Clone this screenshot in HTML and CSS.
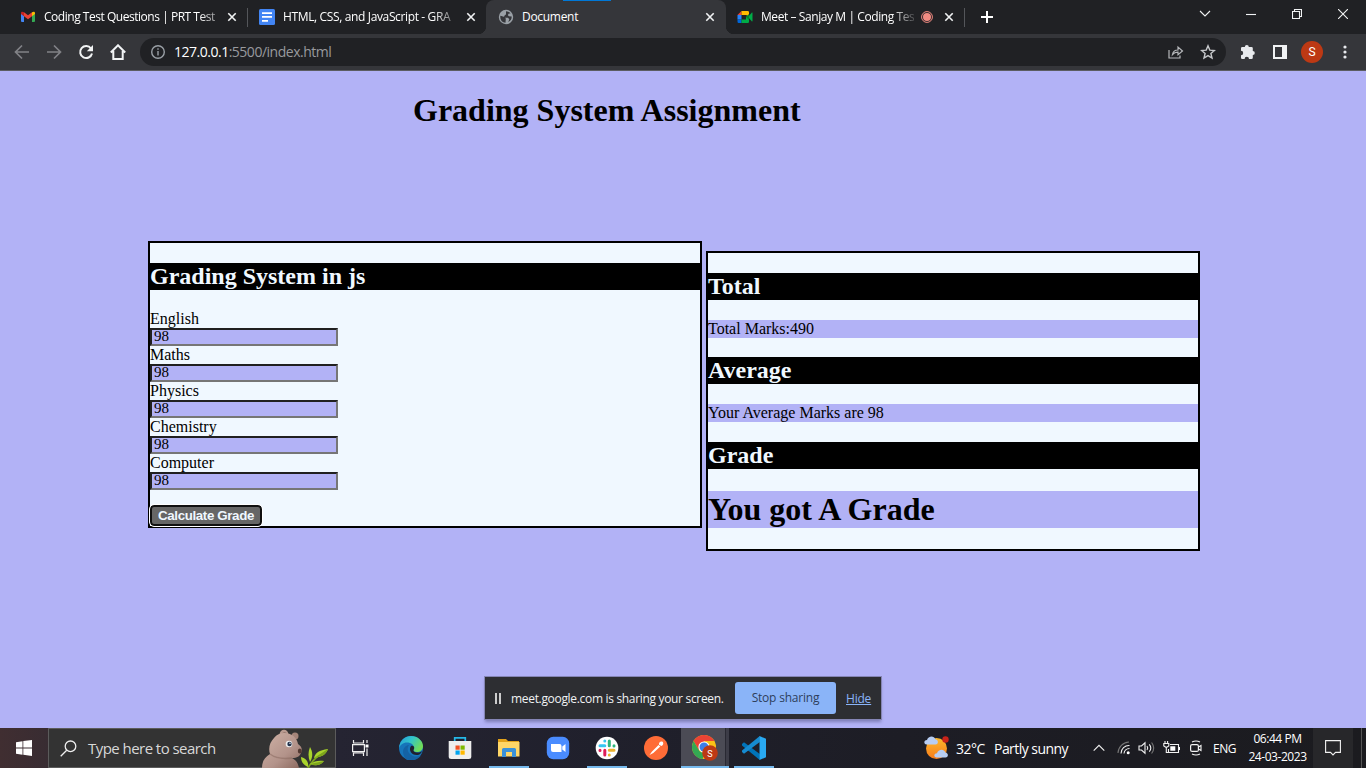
FILE: index.html
```html
<!DOCTYPE html>
<html lang="en">
<head>
<meta charset="utf-8">
<title>Document</title>
<link rel="stylesheet" href="styles.css">
</head>
<body>
<div class="screen">
  <header class="tabstrip">
    <div class="tab tab-mail">
      <svg class="fav" viewBox="0 0 16 16"><path fill="#4285f4" d="M1 4.500l3 2.200V13H2a1 1 0 0 1-1-1z"/><path fill="#34a853" d="M12 6.700l3-2.200V12a1 1 0 0 1-1 1h-2z"/><path fill="#ea4335" d="M4 3.300l4 3 4-3v3.900l-4 3-4-3z"/><path fill="#c5221f" d="M1 4.200C1 2.500 2.700 2.300 4 3.300v3.900L1 5z"/><path fill="#fbbc04" d="M15 4.200c0-1.700-1.700-1.900-3-.9v3.900L15 5z"/></svg>
      <span class="tab-title">Coding Test Questions | PRT Test</span>
      <svg class="close" viewBox="0 0 10 10"><path d="M1.300 1.300l7.400 7.400M8.700 1.300L1.300 8.700"/></svg>
    </div>
    <div class="tab tab-docs">
      <svg class="fav" viewBox="0 0 16 16"><rect width="16" height="16" rx="1.500" fill="#4285f4"/><path fill="#fff" d="M3 3.200h10v1.800H3zM3 7h10v1.800H3zM3 11h6v1.800H3z"/></svg>
      <span class="tab-title">HTML, CSS, and JavaScript - GRA</span>
      <svg class="close" viewBox="0 0 10 10"><path d="M1.300 1.300l7.400 7.400M8.700 1.300L1.300 8.700"/></svg>
    </div>
    <div class="tab tab-active">
      <svg class="fav" viewBox="0 0 16 16"><circle cx="8" cy="8" r="7.200" fill="#9aa0a6"/><path fill="#35363a" d="M2.300 6.700l4.500 1.300 1 1.800-.3 3.900C4.500 13.500 2 11.500 2.300 6.700zM8 2.200c2 0 3.500 1 4.500 2.200l-1.700.2-1 1.500 1 1.200 2.900.2c.1 2.500-1.200 4.500-3.400 5.500l1-2.700-1.300-1.500H7.500L6 7.400l1-1.500 1-.4z"/></svg>
      <span class="tab-title">Document</span>
      <svg class="close" viewBox="0 0 10 10"><path d="M1.300 1.300l7.400 7.400M8.700 1.300L1.300 8.700"/></svg>
    </div>
    <div class="tab tab-meet">
      <svg class="fav" viewBox="0 0 16 16"><path fill="#ea4335" d="M4.500 2v4H.5z"/><path fill="#2684fc" d="M.5 6h4v4.500h-4z"/><path fill="#0066da" d="M.5 10.500h4v3.500H1.700A1.200 1.200 0 0 1 .5 12.800z"/><path fill="#ffba00" d="M4.500 2h6.300A1.200 1.200 0 0 1 12 3.200v4L9 6H4.500z"/><path fill="#00ac47" d="M9 8l3-2v6.800a1.200 1.200 0 0 1-1.200 1.200H4.500v-3.500H9z"/><path fill="#00ac47" d="M11 8l3.700-4.300c.4-.3.800-.1.800.3v8c0 .5-.4.600-.8.300z"/><path fill="#00832d" d="M9 8l3-3v6z"/></svg>
      <span class="tab-title">Meet – Sanjay M | Coding Tes</span>
      <svg class="rec" viewBox="0 0 12 12"><circle cx="6" cy="6" r="5.400" fill="none" stroke="#f28b82"/><circle cx="6" cy="6" r="4" fill="#f28b82"/></svg>
      <svg class="close" viewBox="0 0 10 10"><path d="M1.300 1.300l7.400 7.400M8.700 1.300L1.300 8.700"/></svg>
    </div>
    <svg class="newtab" viewBox="0 0 12 12"><path d="M6 0v12M0 6h12"/></svg>
    <div class="winctl">
      <svg width="12" height="8" viewBox="0 0 12 8"><path d="M1 1l5 5 5-5"/></svg>
      <svg width="10" height="10" viewBox="0 0 10 10"><path d="M0 5.500h10"/></svg>
      <svg width="10" height="10" viewBox="0 0 10 10"><path d="M.5 2.500h7v7h-7zM2.500 2.500v-2h7v7h-2"/></svg>
      <svg width="10" height="10" viewBox="0 0 10 10"><path d="M0 0l10 10M10 0L0 10"/></svg>
    </div>
    <i class="drag-mark"></i>
  </header>

  <div class="toolbar">
    <svg class="nav dim" viewBox="0 0 16 16"><path d="M15 8H2M8 1.500L1.500 8 8 14.500"/></svg>
    <svg class="nav dim" viewBox="0 0 16 16"><path d="M1 8h13M8 1.500L14.500 8 8 14.500"/></svg>
    <svg class="nav lit" viewBox="0 0 16 16"><path d="M13 4.500A6 6 0 1 0 14 9.500"/><path class="solid" d="M15 1v6.200H8.800z"/></svg>
    <svg class="nav lit" viewBox="0 0 16 16"><path d="M.8 8.500L8 1.300l7.200 7.200M3.300 7v8h9.400V7"/></svg>
    <div class="omnibox">
      <svg class="info" viewBox="0 0 14 14"><circle cx="7" cy="7" r="6.300"/><path d="M7 6v4.500M7 3.200v1.600"/></svg>
      <span class="url"><b>127.0.0.1</b>:5500/index.html</span>
      <svg class="share" viewBox="0 0 16 14"><path d="M1 5v8h11v-2.500M4.500 9.500c.5-3 2.500-4.500 5.500-4.500V2l4.500 4L10 9.800V7.200c-2.500-.1-4 .6-5.500 2.300z"/></svg>
      <svg class="star" viewBox="0 0 16 16"><path d="M8 1.800l1.800 4.300 4.600.4-3.500 3 1.100 4.500-4-2.400-4 2.400 1.100-4.500-3.500-3 4.600-.4z"/></svg>
    </div>
    <svg class="puzzle" viewBox="0 0 16 16"><path fill="#e8eaed" d="M4.800 3a2 2 0 0 1 4 0h2.700a1.300 1.300 0 0 1 1.300 1.300V7a2 2 0 0 1 0 4v2.700a1.300 1.300 0 0 1-1.300 1.300H9a2.200 2.200 0 0 0-4.400 0H2.300A1.300 1.300 0 0 1 1 13.700V11.200a2.200 2.200 0 0 0 0-4.400V4.300A1.300 1.300 0 0 1 2.300 3z"/></svg>
    <svg class="side" viewBox="0 0 14 14"><path fill="#f1f3f4" fill-rule="evenodd" d="M0 0h14v14H0zM2 2v10h7V2z"/></svg>
    <span class="avatar">S</span>
    <svg class="dots" viewBox="0 0 4 14"><circle cx="2" cy="2" r="1.600"/><circle cx="2" cy="7" r="1.600"/><circle cx="2" cy="12" r="1.600"/></svg>
  </div>

  <main class="page">
    <h1 class="title">Grading System Assignment</h1>
    <div class="panels">
      <form class="panel form-panel">
        <h2>Grading System in js</h2>
        <label>English</label><div class="field">98</div>
        <label>Maths</label><div class="field">98</div>
        <label>Physics</label><div class="field">98</div>
        <label>Chemistry</label><div class="field">98</div>
        <label>Computer</label><div class="field">98</div>
        <button type="button" class="calc">Calculate Grade</button>
      </form>
      <section class="panel result-panel">
        <h2>Total</h2>
        <p>Total Marks:490</p>
        <h2 class="avg">Average</h2>
        <p>Your Average Marks are 98</p>
        <h2 class="grade">Grade</h2>
        <h1>You got A Grade</h1>
      </section>
    </div>
    <div class="sharebar">
      <i class="pause"></i>
      <span class="share-text">meet.google.com is sharing your screen.</span>
      <span class="stop">Stop sharing</span>
      <span class="hide">Hide</span>
    </div>
  </main>

  <footer class="taskbar">
    <div class="start"><svg width="16" height="16" viewBox="0 0 16 16"><path fill="#fff" d="M0 2.200L6.500 1.200v6.300H0zM7.300 1.100L16 0v7.500H7.300zM0 8.400h6.500v6.300L0 13.800zM7.300 8.400H16V16l-8.700-1.200z"/></svg></div>
    <div class="search">
      <svg width="17" height="17" viewBox="0 0 17 17"><circle cx="10.500" cy="6.300" r="5.300" fill="none" stroke="#eee" stroke-width="1.300"/><path stroke="#eee" stroke-width="1.300" d="M6.700 10.200L.7 16.200"/></svg>
      <span>Type here to search</span>
      <svg class="bear" width="68" height="39" viewBox="0 0 68 39">
        <defs><linearGradient id="fur" x1="0" y1="0" x2="1" y2="1"><stop offset="0" stop-color="#d0b3a7"/><stop offset=".6" stop-color="#b3938a"/><stop offset="1" stop-color="#8a685e"/></linearGradient></defs>
        <circle cx="22" cy="5" r="4.300" fill="#b99b90"/><circle cx="22.500" cy="5.500" r="2.300" fill="#8d6d63"/>
        <circle cx="33" cy="7" r="3.500" fill="#a5857a"/>
        <path fill="url(#fur)" d="M0 39C0 32 3 28 8 25 6 19 8 13 12 9c3-4 7-5 11-5 7 0 12 5 13 11 3 2 5 5 3 9-1 3-4 5-9 5 4 2 6 5 7 10z"/>
        <path d="M8 25q8 6 22 4" stroke="#86655b" stroke-width="1.500" fill="none" opacity=".5"/>
        <circle cx="27" cy="15" r="3.300" fill="#eee"/><circle cx="27.500" cy="15" r="2.200" fill="#23334e"/><circle cx="28" cy="14.300" r=".7" fill="#fff"/><ellipse cx="37.800" cy="22" rx="2" ry="2.600" fill="#513831"/>
        <path fill="none" stroke="#7fa81f" stroke-width="1.600" d="M46 39c4-7 9-12 16-16"/>
        <path fill="#a9d42c" d="M46 38c-5-2-7-6-7-10 5 1 8 5 7 10zM48 33c-2-5-2-10 0-15 3 5 3 10 0 15zM52 29c1-5 5-8 14-9-2 6-7 8-14 9zM48 35c4-3 9-4 14-3-4 5-9 5-14 3z"/><path fill="#7da51c" d="M52 29l14-9c-2 6-7 8-14 9zM48 35l14-3c-4 5-9 5-14 3z"/>
      </svg>
    </div>
    <nav class="apps">
      <div class="app task-view"><svg width="18" height="18" viewBox="0 0 18 18"><path fill="none" stroke="#eee" stroke-width="1.200" d="M2.500 1v3h10V1M2.500 17v-3h10v3M1.600 5.600h11.800v7H1.600zM16 1v3M16 9.500V17"/><path fill="#fff" d="M14.500 5.500h3v3h-3z"/></svg></div>
      <div class="app"><svg width="24" height="24" viewBox="0 0 24 24"><defs><linearGradient id="e1" x1="0" y1="0" x2="1" y2=".5"><stop offset="0" stop-color="#2499da"/><stop offset=".5" stop-color="#32c5ca"/><stop offset="1" stop-color="#70dc58"/></linearGradient></defs><circle cx="12" cy="12" r="12" fill="#1675ba"/><path fill="url(#e1)" d="M0 12C1 4 6 0 12 0c7 0 12 5 12 10 0 4-3 6-6 6-3 0-4-1-3.500-2.500C16 9 12 6.500 8 6.500c-4 0-7 2.500-8 5.500z"/><path fill="#1462a4" d="M8 24C2 19 3 10 10 9c-3 4-1 9 4 11 3 1 5.500.5 8-.5-3 4-8 6-14 4.500z"/><path fill="#20202d" d="M12 10c2-1 4 .5 3 3-1 1.500-.5 3 2.500 3.500 2.500.3 4-.3 5.500-1.500-.5 2-2 3.500-4 4-6 1-10-5-7-9z"/></svg></div>
      <div class="app"><svg width="24" height="24" viewBox="0 0 24 24"><path fill="none" stroke="#25b9e8" stroke-width="1.700" d="M6.700 6V1.800h10.600V6"/><path fill="#eee" d="M.7 5h22.600v15.500a2.500 2.500 0 0 1-2.500 2.500H3.200a2.500 2.500 0 0 1-2.500-2.500z"/><path fill="#f25022" d="M7.500 9.500h4.200v4.200H7.500z"/><path fill="#7fba00" d="M12.500 9.500h4.200v4.200h-4.200z"/><path fill="#00a4ef" d="M7.500 14.500h4.200v4.200H7.500z"/><path fill="#ffb900" d="M12.500 14.500h4.200v4.200h-4.200z"/></svg></div>
      <div class="app run"><svg width="22" height="20" viewBox="0 0 22 20"><path fill="#e3a21a" d="M0 1h8l2 2h11v4H0z"/><path fill="#ffd667" d="M0 4h21.500v14.500H0z"/><path fill="#3b91d8" d="M4 19v-7.500a1.500 1.500 0 0 1 1.500-1.500h11a1.500 1.500 0 0 1 1.500 1.500V19h-4v-5H8v5z"/></svg></div>
      <div class="app"><svg width="24" height="24" viewBox="0 0 24 24"><rect x=".8" y=".8" width="22.400" height="22.400" rx="6.500" fill="#4a8cff"/><path fill="#fff" d="M5 8h8.500a2 2 0 0 1 2 2v6H7a2 2 0 0 1-2-2zM16.300 10.500L19.500 8v8l-3.200-2.500z"/></svg></div>
      <div class="app run"><svg width="24" height="24" viewBox="0 0 24 24"><circle cx="12" cy="12" r="11.300" fill="#fff"/><g fill="none" stroke-width="3" stroke-linecap="round"><path stroke="#36c5f0" d="M9.800 5v.1M5 9.800h4.800"/><path stroke="#2eb67d" d="M14.300 5v4.800M19 9.800v.1"/><path stroke="#ecb22e" d="M14.300 14.300H19M14.300 19v.1"/><path stroke="#e01e5a" d="M9.800 14.300V19M5 14.300v.1"/></g></svg></div>
      <div class="app"><svg width="24" height="24" viewBox="0 0 24 24"><circle cx="12" cy="12" r="12" fill="#ff6c37"/><path fill="#fff" d="M5.500 19l2.500-3.500 6.500-6.500 1.800 1.600-7 6.500zM15 8.800c-.5-2 1.200-3.800 3-3.300 1.800.6 1.800 3.500-.5 4.500z"/></svg></div>
      <div class="app run open"><svg width="26" height="26" viewBox="0 0 26 26"><circle cx="12" cy="12" r="12" fill="#fbc116"/><path fill="#ea4335" d="M1.600 6A12 12 0 0 1 22.400 6H12v6L6.800 15z"/><path fill="#34a853" d="M1.600 6l5.200 9c1.500 2.700 5 3 6.500 2.800L10.500 24A12 12 0 0 1 1.600 6z"/><circle cx="12" cy="12" r="5.600" fill="#fff"/><circle cx="12" cy="12" r="4.500" fill="#3d7ee8"/><circle cx="18" cy="18" r="7.800" fill="#bd3914"/><text x="18" y="21.500" text-anchor="middle" class="badge">S</text></svg></div>
      <div class="app run code"><svg width="24" height="24" viewBox="0 0 24 24"><path fill="#0074ba" d="M0 8l2-1.700L17.800 18v6L0 9.500z"/><path fill="#168bd0" d="M0 16l2 1.700L17.800 6V0L0 14.500z"/><path fill="#29a9f2" d="M17.500 0L24 2.800v18.400L17.500 24z"/></svg></div>
    </nav>
    <div class="tray">
      <svg class="weather" width="26" height="24" viewBox="0 0 26 24"><defs><linearGradient id="sun" x1="0" y1="0" x2="0" y2="1"><stop offset="0" stop-color="#fcb92c"/><stop offset="1" stop-color="#f87b19"/></linearGradient></defs><circle cx="12.500" cy="12.500" r="10.500" fill="url(#sun)"/><path fill="#b7cdf2" d="M2.500 8.500c-3-.2-3-4.300.5-4.500 1-4 7-5 8.300-.8 3.400.3 3.400 5 .2 5.300zM12.500 21.500c-3-.2-3-4 .5-4.300 1-4 7-5 8.300-.8 3.400.3 3.400 5 .2 5.100z"/><circle cx="21.500" cy="3.500" r="3.200" fill="#c9231a"/></svg>
      <span class="temp">32°C</span><span class="sky">Partly sunny</span>
      <svg class="up" width="12" height="8" viewBox="0 0 12 8"><path d="M.7 6.700L6 1.300l5.300 5.400"/></svg>
      <svg class="wifi" width="14" height="14" viewBox="0 0 14 14"><g><path d="M1 12A11.500 11.500 0 0 1 12 1"/><path d="M4 12.500A8 8 0 0 1 12.500 4.500M7 12.500a5.500 5.500 0 0 1 5.500-5"/></g><circle cx="11.200" cy="11.800" r="1.500" fill="#fff"/></svg>
      <svg class="vol" width="17" height="14" viewBox="0 0 17 14"><path d="M1 5h2.500L7 1.800v10.400L3.500 9H1zM9 5q1.500 2 0 4M11.300 3.300q3 3.700 0 7.400"/><path class="faint" d="M13.600 1.500q4.200 5.500 0 11"/></svg>
      <svg class="bat" width="17" height="14" viewBox="0 0 17 14"><path d="M7 3.500h8.500v8H5.500V8M.8 2.500h5v2.500l-2.500 1.500L.8 5zM2 2.500V0M4.600 2.500V0M3.300 6.500v5h2.200"/><path class="charge" d="M7.300 5.300h5v4.400h-5zM16 6h1v3h-1z"/></svg>
      <svg class="cam" width="12" height="16" viewBox="0 0 12 16"><rect x=".6" y="4.600" width="7.800" height="6.800" rx="1.500"/><path d="M8.500 7l2.500-1.500v5L8.500 9M2 2q4-2 8 0M2 14q4 2 8 0"/></svg>
      <span class="lang">ENG</span>
      <div class="clock"><span>06:44 PM</span><span>24-03-2023</span></div>
      <div class="notif"><svg width="16" height="16" viewBox="0 0 16 16"><path d="M.6.600h14.800v11.800h-4.900L8 15l-2.500-2.600H.6z"/></svg></div>
    </div>
  </footer>
</div>
</body>
</html>
```
FILE: styles.css
```css
* { box-sizing: border-box; }
body { margin: 0; background: #b2b2f6; font-family: "Liberation Serif", "Times New Roman", serif; }
svg { display: block; flex: none; }
.screen { width: 1366px; height: 768px; display: flex; flex-direction: column; overflow: hidden; }
.tabstrip, .toolbar, .taskbar, .sharebar { font-family: "Open Sans", "Noto Sans", sans-serif; }

/* Tabs */
.tabstrip { position: relative; height: 34px; flex: none; display: flex; background: #202124; color: #fff; font-size: 12px; }
.tab { height: 34px; display: flex; align-items: center; position: relative; }
.tab-mail { width: 248px; padding-left: 20px; }
.tab-docs { width: 238px; padding-left: 11px; }
.tab-active { width: 240px; padding-left: 12px; background: #35363a; border-radius: 8px 8px 0 0; }
.tab-meet { width: 239px; padding-left: 11px; }
.tab-mail::after, .tab-meet::after { content: ""; position: absolute; right: 0; top: 8px; width: 1px; height: 19px; background: #54565a; }
.tab-active::before, .tab-active::after { content: ""; position: absolute; bottom: 0; width: 8px; height: 8px; }
.tab-active::before { left: -8px; background: radial-gradient(circle at 0 0, transparent 8px, #35363a 8.500px); }
.tab-active::after { right: -8px; background: radial-gradient(circle at 100% 0, transparent 8px, #35363a 8.500px); }
.fav { width: 16px; height: 16px; }
.tab-title { margin-left: 8px; width: 174px; white-space: nowrap; line-height: 18px; font-weight: 450; letter-spacing: -.3px; }
.tab-mail .tab-title { width: 175px; letter-spacing: -.47px; -webkit-mask-image: linear-gradient(90deg, #000 155px, #0006 175px); mask-image: linear-gradient(90deg, #000 155px, #0006 175px); }
.tab-docs .tab-title { width: 176px; letter-spacing: -.36px; -webkit-mask-image: linear-gradient(90deg, #000 150px, #0003 175px); mask-image: linear-gradient(90deg, #000 150px, #0003 175px); }
.tab-meet .tab-title { width: 153px; letter-spacing: -.42px; -webkit-mask-image: linear-gradient(90deg, #000 130px, #0003 153px); mask-image: linear-gradient(90deg, #000 130px, #0003 153px); }
.rec { width: 12px; height: 12px; margin-left: 7px; }
.close { width: 10px; height: 10px; margin-left: 8px; }
.tab-docs .close { margin-left: 7px; }
.tab-active .close { margin-left: 9px; }
.tab-meet .close { margin-left: 11px; }
.close path { stroke: #f1f3f4; stroke-width: 1.600; }
.newtab { width: 12px; height: 12px; margin: 11px 0 0 16px; }
.newtab path { stroke: #fff; stroke-width: 2; }
.winctl { margin-left: auto; margin-right: 18px; height: 28px; display: flex; align-items: center; gap: 36px; }
.winctl svg:first-child { margin-right: -1px; }
.winctl path { stroke: #f1f3f4; fill: none; stroke-width: 1.100; }
.drag-mark { position: absolute; left: 563px; top: 0; width: 48px; height: 1px; background: #0078d7; }

/* Toolbar */
.toolbar { height: 37px; flex: none; background: #35363a; border-bottom: 1px solid #5b5c61; display: flex; align-items: center; padding-left: 14px; }
.nav { width: 16px; height: 16px; margin-right: 16px; fill: none; stroke-width: 1.700; }
.nav.dim { stroke: #818286; }
.nav.lit { stroke: #f1f3f4; stroke-width: 2; }
.nav .solid { fill: #f1f3f4; stroke: none; }
.omnibox { width: 1086px; height: 28px; margin-left: -2px; border-radius: 14px; background: #202124; display: flex; align-items: center; padding: 0 10px 0 11px; }
.info { width: 14px; height: 14px; fill: none; stroke: #9aa0a6; stroke-width: 1.400; }
.url { margin-left: 9px; font-size: 14px; line-height: 20px; color: #989a9e; flex: 1; letter-spacing: -.49px; }
.url b { font-weight: 450; color: #fff; }
.share { width: 16px; height: 14px; fill: none; stroke: #b6b8bb; stroke-width: 1.200; }
.star { width: 16px; height: 16px; margin-left: 16px; fill: none; stroke: #c6c8cb; stroke-width: 1.400; }
.puzzle { width: 16px; height: 16px; margin-left: 14px; }
.side { width: 14px; height: 14px; margin-left: 17px; }
.avatar { width: 22px; height: 22px; margin-left: 14px; border-radius: 50%; background: #bd3914; color: #fff; font: 12px/22px Roboto, sans-serif; text-align: center; }
.dots { width: 4px; height: 14px; margin-left: 20px; fill: #e8eaed; }

/* Grading page */
.page { position: relative; height: 657px; flex: none; background: #b2b2f6; }
h1, h2, p { margin: 0; }
h1 { font-size: 32px; line-height: 37px; }
h2 { font-size: 24px; line-height: 27px; }
.title { padding: 21px 0 0 413px; white-space: nowrap; }
.panels { display: flex; align-items: flex-start; gap: 4px; padding: 112px 0 0 148px; }
.panel { background: #f0f8ff; border: 2px solid #000; }
.panel h2 { background: #000; color: #f0f8ff; }
.form-panel { width: 554px; height: 287px; padding-top: 20px; }
.form-panel h2 { margin-bottom: 20px; }
.form-panel label { display: block; font-size: 16px; line-height: 18px; height: 18px; }
.field { width: 188px; height: 18px; border: 2px solid; border-color: #202020 #767676 #767676 #202020; padding: 0 2px; background: #b2b2f6; font-size: 15px; line-height: 13px; }
.calc { display: block; width: 112px; height: 21px; margin-top: 15px; padding: 0; border: 2px solid #101010; border-radius: 4px; outline: 1px solid #fff; background: #666; color: #f0f8ff; font: bold 13.333px/17px "Liberation Sans", Arial, sans-serif; letter-spacing: -.37px; }
.result-panel { width: 494px; height: 300px; margin-top: 10px; padding-top: 20px; }
.result-panel p { margin-top: 20px; background: #b2b2f6; font-size: 16px; line-height: 18px; }
.avg { margin-top: 19px; }
.grade { margin-top: 20px; }
.result-panel h1 { margin-top: 22px; background: #b2b2f6; }

/* Screen sharing notice, floating over the page */
.sharebar { position: absolute; left: 485px; top: 606px; width: 396px; height: 42px; background: #2d2e32; box-shadow: 0 0 0 1px #8585b5, 0 3px 3px rgba(50,50,90,.4); display: flex; align-items: center; color: #f1f3f4; font-size: 12px; white-space: nowrap; }
.pause { width: 6px; height: 11px; margin-left: 10px; border: solid #ccc; border-width: 0 2px; }
.share-text { margin-left: 10px; width: 214px; font-weight: 450; letter-spacing: -.32px; }
.stop { width: 101px; height: 32px; margin-left: 10px; border-radius: 3px; background: #8ab4f8; color: #2e3f5c; font-weight: 500; letter-spacing: -.2px; line-height: 32px; text-align: center; }
.hide { margin-left: 10px; color: #8ab4f8; text-decoration: underline; letter-spacing: -.2px; }

/* Taskbar */
.taskbar { height: 40px; flex: none; display: flex; background: linear-gradient(90deg, #402e31 0, #382c32 48px, #252432 336px, #20202c 600px, #1d1d25 900px, #1b1b1f 1366px); color: #fff; }
.start { width: 48px; display: flex; align-items: center; justify-content: center; }
.search { width: 288px; border: 1px solid #5b5b5b; background: #333; display: flex; align-items: center; font-size: 15px; color: #d8d8d8; white-space: nowrap; padding-left: 11px; }
.search span { margin-left: 11px; width: 130px; line-height: 20px; letter-spacing: -.55px; }
.bear { margin-left: 44px; }
.apps { display: flex; padding-left: 1px; }
.app { width: 49px; height: 40px; display: flex; align-items: center; justify-content: center; position: relative; }
.task-view { padding-right: 4px; }
.run::after { content: ""; position: absolute; left: 5px; bottom: 0; width: 40px; height: 2px; background: #76b9ed; }
.open { background: linear-gradient(90deg, transparent 1px, #4b4b55 1px, #4b4b55 45px, #292933 45px, #292933 46px, #3c3c47 46px); }
.open::after { left: 1px; width: 48px; }
.badge { font: 9px Roboto, sans-serif; fill: #fff; }
.tray { margin-left: auto; margin-right: 4px; border-right: 1px solid #555; display: flex; align-items: center; white-space: nowrap; }
.tray path { fill: none; stroke: #f2f2f2; stroke-width: 1.100; }
.tray .weather path { fill: #b7cdf2; stroke: none; }
.tray .wifi path:first-child, .tray .faint { stroke: #777; }
.tray .charge { fill: #fff; stroke: none; }
.temp { margin-left: 6px; width: 31px; font-size: 14px; letter-spacing: -.5px; }
.sky { margin-left: 7px; width: 76px; font-size: 14px; letter-spacing: -.54px; }
.up { margin-left: 23px; }
.wifi { margin-left: 12px; }
.vol { margin-left: 7px; }
.bat { margin-left: 8px; }
.cam { margin-left: 10px; }
.cam rect { fill: none; stroke: #f2f2f2; stroke-width: 1.200; }
.lang { margin-left: 11px; width: 24px; font-size: 12px; letter-spacing: -.5px; }
.clock { width: 76px; padding-left: 5px; display: flex; flex-direction: column; align-items: center; font-size: 12px; line-height: 18px; letter-spacing: -.45px; }
.notif { width: 40px; height: 40px; margin-right: 8px; background: #27272a; display: flex; align-items: center; justify-content: center; }
```
